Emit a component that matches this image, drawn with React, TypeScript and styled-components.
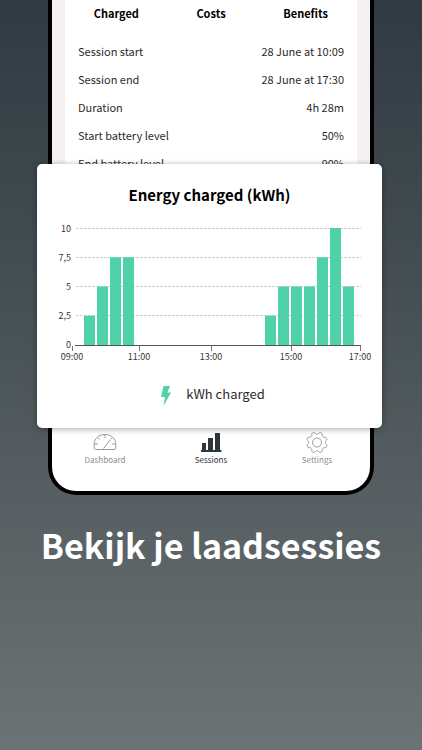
import React from "react";
import styled, { createGlobalStyle } from "styled-components";

const GlobalStyle = createGlobalStyle`
  * { box-sizing: border-box; }
  body {
    margin: 0;
    background: #6a7173;
    font-family: "Noto Sans CJK SC", "Noto Sans", sans-serif;
    color: #2b2b2b;
  }
`;

const Page = styled.main`
  min-height: 100vh;
  overflow: hidden;
  background: linear-gradient(180deg, #303a41 0%, #4c5558 50%, #6c7375 100%);
`;

const Stage = styled.section`
  position: relative;
  padding: 0 48px;
`;

const Phone = styled.div`
  border: solid #000;
  border-width: 0 4px 4px;
  border-radius: 0 0 28px 28px;
  background: #fff;
  overflow: hidden;
`;

const Screen = styled.div`
  min-height: 424px;
  padding: 0 13px;
  background: #f5f1f0;
`;

const Details = styled.div`
  min-height: 424px;
  background: #fff;
`;

const Tabs = styled.div`
  display: grid;
  grid-template-columns: repeat(3, 1fr);
  padding: 0 4px;
`;

const Tab = styled.button`
  height: 26px;
  padding: 0;
  border: 0;
  background: none;
  font: 700 11px/26px "Noto Sans CJK SC", "Noto Sans", sans-serif;
  color: #000;
`;

const Rows = styled.dl`
  margin: 0;
  padding: 11px 13px 0;
`;

const Row = styled.div`
  display: flex;
  justify-content: space-between;
  height: 28px;
  font-size: 11px;
  line-height: 28px;

  dt, dd { margin: 0; }
`;

const NavBar = styled.nav`
  display: grid;
  grid-template-columns: repeat(3, 1fr);
  height: 67px;
  padding-top: 7px;
`;

const NavLink = styled.a<{ $active?: boolean }>`
  display: flex;
  flex-direction: column;
  align-items: center;
  font-size: 8px;
  line-height: 12px;
  text-decoration: none;
  color: ${(p) => (p.$active ? "#2c3337" : "#8b8b8b")};

  svg { display: block; width: 24px; height: 23px; }
`;

const Card = styled.article`
  position: absolute;
  top: 164px;
  left: 37px;
  right: 40px;
  display: flex;
  flex-direction: column;
  align-items: center;
  height: 264px;
  padding: 18px 0 0;
  border-radius: 5px;
  background: #fff;
  box-shadow: 0 1px 6px rgba(0, 0, 0, 0.35);
`;

const CardTitle = styled.h2`
  margin: 0;
  font-size: 15px;
  line-height: 26px;
  font-weight: 700;
  color: #000;
`;

const Chart = styled.svg`
  display: block;
  width: 100%;
  height: 150px;
  margin-top: 8px;
  font-size: 9px;
`;

const Legend = styled.div`
  display: flex;
  align-items: center;
  gap: 14px;
  height: 28px;
  margin-top: 14px;
  padding-left: 6px;
  font-size: 13px;
  line-height: 28px;

  svg { width: 12px; height: 20px; margin-top: 3px; }
`;

const Headline = styled.h1`
  margin: 20px 0 0;
  font-size: 34px;
  line-height: 60px;
  font-weight: 700;
  text-align: center;
  color: #fff;
`;

const details = [
  ["Session start", "28 June at 10:09"],
  ["Session end", "28 June at 17:30"],
  ["Duration", "4h 28m"],
  ["Start battery level", "50%"],
  ["End battery level", "90%"],
];

const gridLines = [
  { label: "10", y: 13 },
  { label: "7,5", y: 42 },
  { label: "5", y: 71 },
  { label: "2,5", y: 100 },
];

const hours = [
  { label: "09:00", x: 35 },
  { label: "11:00", x: 102 },
  { label: "13:00", x: 174 },
  { label: "15:00", x: 254 },
  { label: "17:00", x: 323 },
];

const bars = [
  { x: 47, kwh: 2.5 },
  { x: 60, kwh: 5 },
  { x: 73, kwh: 7.5 },
  { x: 86, kwh: 7.5 },
  { x: 228, kwh: 2.5 },
  { x: 241, kwh: 5 },
  { x: 254, kwh: 5 },
  { x: 267, kwh: 5 },
  { x: 280, kwh: 7.5 },
  { x: 293, kwh: 10 },
  { x: 306, kwh: 5 },
];

const AXIS_Y = 129;
const KWH_HEIGHT = 11.7;

function EnergyChart() {
  return (
    <Chart viewBox="0 0 345 150" role="img" aria-label="Energy charged per half hour">
      {gridLines.map((g) => (
        <g key={g.label}>
          <line x1="39" x2="324" y1={g.y - 0.5} y2={g.y - 0.5} stroke="#d0d0d0" strokeDasharray="3 1" />
          <text x="34" y={g.y + 3} textAnchor="end" fill="#333">{g.label}</text>
        </g>
      ))}
      <text x="34" y={AXIS_Y + 3} textAnchor="end" fill="#333">0</text>
      {bars.map((b) => (
        <rect key={b.x} x={b.x} y={AXIS_Y - b.kwh * KWH_HEIGHT} width="11" height={b.kwh * KWH_HEIGHT} fill="#4fd1a9" />
      ))}
      <line x1="38" x2="324" y1="129.5" y2="129.5" stroke="#555" />
      {hours.map((h) => (
        <g key={h.label}>
          <line x1={h.x + 0.5} x2={h.x + 0.5} y1="130" y2="135" stroke="#777" />
          <text x={h.x} y="144" textAnchor="middle" fill="#333">{h.label}</text>
        </g>
      ))}
    </Chart>
  );
}

function GaugeIcon() {
  return (
    <svg viewBox="0 0 24 23" fill="none" stroke="#9a9a9a" strokeWidth="1" aria-hidden="true">
      <path d="M1.500 18C-.5 9 4.500 3.500 12 3.500S24.500 9 22.500 18Q22.300 18.500 21.500 18.500H2.500Q1.700 18.500 1.500 18Z" />
      <path d="M12 3.500v3.500M1.500 13h3.500M19 13h3.500M4.500 6.500l2 2M19.500 6.500l-1.500 1.500M10.500 17.500l7-9" />
    </svg>
  );
}

function BarsIcon() {
  return (
    <svg viewBox="0 0 24 23" fill="#2c363c" aria-hidden="true">
      <path d="M3 12h4v7h2V7h5v12h2V2h5v17h1.500v2H2v-2h1Z" />
    </svg>
  );
}

function GearIcon() {
  const points = Array.from({ length: 96 }, (_, i) => {
    const a = (i / 96) * Math.PI * 2;
    const r = 9.4 - Math.tanh(2 * Math.cos(8 * a)) * 1.1;
    return `${(12 + r * Math.sin(a)).toFixed(2)} ${(11.5 - r * Math.cos(a)).toFixed(2)}`;
  });
  return (
    <svg viewBox="0 0 24 23" fill="none" stroke="#9a9a9a" strokeWidth="1" aria-hidden="true">
      <path d={`M${points.join("L")}Z`} />
      <circle cx="12" cy="11.5" r="4.5" />
    </svg>
  );
}

export default function App() {
  return (
    <>
      <GlobalStyle />
      <Page>
        <Stage>
          <Phone>
            <Screen>
              <Details>
                <Tabs>
                  <Tab>Charged</Tab>
                  <Tab>Costs</Tab>
                  <Tab>Benefits</Tab>
                </Tabs>
                <Rows>
                  {details.map(([name, value]) => (
                    <Row key={name}>
                      <dt>{name}</dt>
                      <dd>{value}</dd>
                    </Row>
                  ))}
                </Rows>
              </Details>
            </Screen>
            <NavBar>
              <NavLink href="#dashboard"><GaugeIcon />Dashboard</NavLink>
              <NavLink href="#sessions" $active><BarsIcon />Sessions</NavLink>
              <NavLink href="#settings"><GearIcon />Settings</NavLink>
            </NavBar>
          </Phone>
          <Card>
            <CardTitle>Energy charged (kWh)</CardTitle>
            <EnergyChart />
            <Legend>
              <svg viewBox="0 0 12 20" fill="#4fd1a9" aria-hidden="true">
                <path d="M3.500 0H10L7.500 6.500H11L3.500 20 5 11H1Z" />
              </svg>
              kWh charged
            </Legend>
          </Card>
        </Stage>
        <Headline>Bekijk je laadsessies</Headline>
      </Page>
    </>
  );
}
